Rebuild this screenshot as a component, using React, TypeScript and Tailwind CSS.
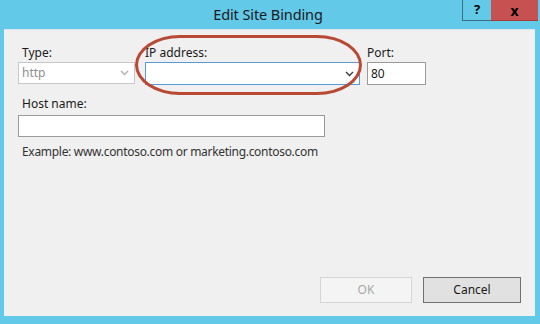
import React from "react";

const Chevron = ({ color }: { color: string }) => (
  <svg width="9" height="6" viewBox="0 0 9 6" fill="none">
    <path d="M1 1 L4.5 4.5 L8 1" stroke={color} strokeWidth="1.4" />
  </svg>
);

export default function App() {
  return (
    <div
      className="w-[540px] h-[324px] bg-[#63c9e9] flex flex-col overflow-hidden relative"
      style={{ fontFamily: '"Segoe UI", "Noto Sans", "Open Sans", sans-serif' }}
    >
      {/* title bar */}
      <div className="h-[29px] flex items-start relative">
        <div className="flex-1 h-[29px] flex items-center justify-center pr-[4px]">
          <span className="text-[14.5px] text-[#1a1a1a] leading-none tracking-[-0.1px]">Edit Site Binding</span>
        </div>
        <div className="absolute right-[2px] top-0 flex">
          <div className="w-[29px] h-[21px] border border-[#3a6f86] border-t-0 border-r-0 flex items-center justify-center text-[13px] font-bold text-black">
            ?
          </div>
          <div className="w-[47px] h-[21px] bg-[#c75050] border-b border-[#a33b3b] flex items-center justify-center text-[14px] font-bold text-black">
            x
          </div>
        </div>
      </div>

      {/* client */}
      <div className="ml-[4px] mr-[5px] h-[287px] bg-[#f0f0f0] border-t border-[#d9e6ee] flex flex-col text-[12px] text-[#1a1a1a] relative">
        <div className="pl-[14px] pt-[14px] flex gap-[10px]">
          <div className="flex flex-col w-[117px]">
            <span className="h-[18px] leading-[18px] pl-[4px]">Type:</span>
            <div className="h-[22px] border border-[#c8c8c8] bg-white flex items-center justify-between pl-[3px] pr-[5px] text-[#8f8f8f]">
              <span>http</span>
              <Chevron color="#b0b0b0" />
            </div>
          </div>
          <div className="flex flex-col w-[215px]">
            <span className="h-[18px] leading-[18px]">IP address:</span>
            <div className="h-[23px] border border-[#5a9bd6] bg-white flex items-center justify-end pr-[5px]">
              <Chevron color="#3c3c3c" />
            </div>
          </div>
          <div className="flex flex-col w-[59px] -ml-[3px]">
            <span className="h-[18px] leading-[18px]">Port:</span>
            <div className="h-[23px] border border-[#9a9a9a] bg-white flex items-center pl-[3px]">
              <span>80</span>
            </div>
          </div>
        </div>

        <div className="pl-[14px] pt-[10px] flex flex-col w-[321px]">
          <span className="h-[20px] leading-[18px] pl-[4px]">Host name:</span>
          <div className="h-[22px] border border-[#9a9a9a] bg-white" />
          <span className="pl-[4px] pt-[6px] leading-[18px] text-[#333] whitespace-nowrap tracking-[-0.3px]">
            Example: www.contoso.com or marketing.contoso.com
          </span>
        </div>

        <div className="flex-1" />
        <div className="flex justify-end gap-[11px] pr-[14px] pb-[13px]">
          <div className="w-[92px] h-[26px] border border-[#d5d5d5] bg-[#f4f4f4] flex items-center justify-center text-[#a8a8a8]">
            OK
          </div>
          <div className="w-[98px] h-[26px] border border-[#707070] bg-[#e1e1e1] flex items-center justify-center text-[#1a1a1a]">
            Cancel
          </div>
        </div>

        {/* annotation */}
        <div className="absolute left-[131px] top-[5px] w-[227px] h-[60px] border-[3px] border-[#b84a35] rounded-[45px/30px] pointer-events-none" />
      </div>
    </div>
  );
}
